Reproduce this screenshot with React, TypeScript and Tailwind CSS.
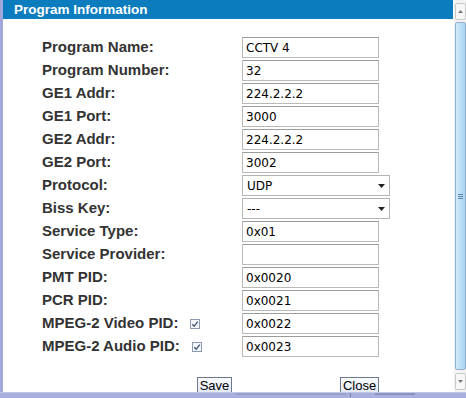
import React from "react";

type Row = {
  label: string;
  value: string;
  kind?: "input" | "select";
  checkbox?: boolean;
};

const rows: Row[] = [
  { label: "Program Name:", value: "CCTV 4" },
  { label: "Program Number:", value: "32" },
  { label: "GE1 Addr:", value: "224.2.2.2" },
  { label: "GE1 Port:", value: "3000" },
  { label: "GE2 Addr:", value: "224.2.2.2" },
  { label: "GE2 Port:", value: "3002" },
  { label: "Protocol:", value: "UDP", kind: "select" },
  { label: "Biss Key:", value: "---", kind: "select" },
  { label: "Service Type:", value: "0x01" },
  { label: "Service Provider:", value: "" },
  { label: "PMT PID:", value: "0x0020" },
  { label: "PCR PID:", value: "0x0021" },
  { label: "MPEG-2 Video PID:", value: "0x0022", checkbox: true },
  { label: "MPEG-2 Audio PID:", value: "0x0023", checkbox: true },
];

function CheckBox() {
  return (
    <span className="ml-[12px] mt-[1px] w-[10px] h-[10px] border border-[#8a9ab0] bg-[#f4f6fa] flex items-center justify-center">
      <svg width="8" height="8" viewBox="0 0 8 8">
        <path d="M1.2 4.2 L3.2 6.2 L6.8 1.6" stroke="#4a5a78" strokeWidth="1.4" fill="none" />
      </svg>
    </span>
  );
}

function Field({ row }: { row: Row }) {
  if (row.kind === "select") {
    return (
      <div className="w-[148px] h-[21px] border border-[#b4b4b4] bg-white flex items-center pl-[4px] pr-[4px] text-[12px] text-black font-['DejaVu_Sans',sans-serif]">
        <span className="flex-1">{row.value}</span>
        <svg width="7" height="4" viewBox="0 0 7 4">
          <path d="M0 0 H7 L3.5 4 Z" fill="#222" />
        </svg>
      </div>
    );
  }
  return (
    <div className="w-[137px] h-[21px] border border-[#b9b9b9] border-t-[#9c9c9c] bg-white flex items-center pl-[3px] text-[12px] text-black font-['DejaVu_Sans',sans-serif]">
      {row.value}
    </div>
  );
}

function ScrollBar() {
  return (
    <div className="w-[12px] shrink-0 bg-[#f3f3f3] flex flex-col items-center pt-[3px]">
      <div className="shrink-0 w-[11px] h-[17px] border border-[#c9c9c9] bg-[#f7f7f7] rounded-[2px] flex items-center justify-center">
        <svg width="5" height="3" viewBox="0 0 5 3">
          <path d="M0 3 L2.5 0 L5 3 Z" fill="#777" />
        </svg>
      </div>
      <div className="shrink-0 mt-[2px] w-[11px] h-[348px] border border-[#8fb3cf] rounded-[2px] bg-gradient-to-r from-[#d3eafa] to-[#a9d3f1] flex items-center justify-center">
        <div className="flex flex-col gap-[1px]">
          <div className="w-[5px] h-[1px] bg-[#5b86ab]" />
          <div className="w-[5px] h-[1px] bg-[#5b86ab]" />
          <div className="w-[5px] h-[1px] bg-[#5b86ab]" />
        </div>
      </div>
      <div className="shrink-0 mt-[3px] w-[11px] h-[17px] border border-[#c9c9c9] bg-[#f7f7f7] rounded-[2px] flex items-center justify-center">
        <svg width="5" height="3" viewBox="0 0 5 3">
          <path d="M0 0 L2.5 3 L5 0 Z" fill="#777" />
        </svg>
      </div>
    </div>
  );
}

export default function App() {
  return (
    <div className="w-[466px] h-[398px] bg-white overflow-hidden flex flex-col font-['Liberation_Sans',Arial,sans-serif]">
      <div className="h-[392px] shrink-0 flex overflow-hidden">
        <div className="w-[3px] shrink-0 bg-[#a3a7dc]" />
        <div className="flex-1 flex flex-col overflow-hidden">
          <div className="shrink-0 h-[19px] bg-[#0b7dbe] flex items-center pl-[11px] mr-[1px]">
            <span className="text-white font-bold text-[13.5px] leading-none">Program Information</span>
          </div>
          <div className="shrink-0 pt-[18px] pl-[39px] flex flex-col gap-[2px]">
            {rows.map((row) => (
              <div key={row.label} className="h-[21px] flex items-center">
                <div className="w-[200px] flex items-center text-[15px] font-bold text-[#333]">
                  <span>{row.label}</span>
                  {row.checkbox && <CheckBox />}
                </div>
                <Field row={row} />
              </div>
            ))}
          </div>
          <div className="shrink-0 mt-[20px] flex">
            <button className="ml-[194px] w-[35px] h-[16px] border border-b-0 border-[#6b7890] bg-gradient-to-b from-[#f8fafd] to-[#e2e9f3] text-[13px] text-black leading-[13px] flex items-start justify-center pt-[1px]">
              Save
            </button>
            <button className="ml-[108px] w-[39px] h-[16px] border border-b-0 border-[#6b7890] bg-gradient-to-b from-[#f8fafd] to-[#e2e9f3] text-[13px] text-black leading-[13px] flex items-start justify-center pt-[1px]">
              Close
            </button>
          </div>
        </div>
        <ScrollBar />
      </div>
      <div className="h-[6px] shrink-0 bg-[#a9afdd] border-t border-[#c3c8ea] flex items-start">
        <div className="ml-[236px] w-[110px] h-[2px] bg-[#9aa0c8]" />
        <div className="ml-[4px] w-[1px] h-[4px] bg-[#7d82a8]" />
        <div className="ml-[24px] w-[40px] h-[2px] bg-[#8c92bc]" />
      </div>
    </div>
  );
}
